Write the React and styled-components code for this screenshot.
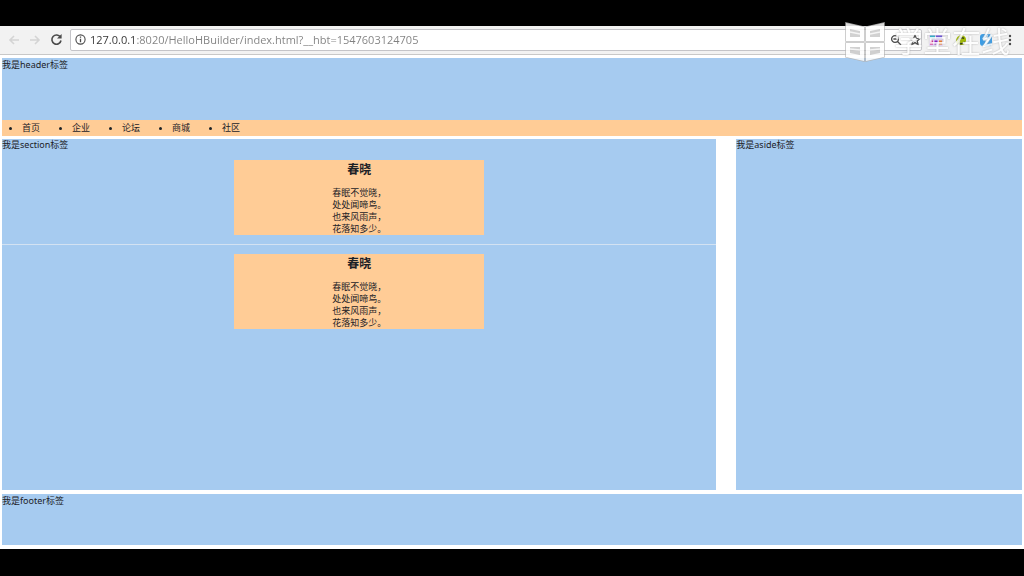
import styled, { createGlobalStyle } from 'styled-components';

const GlobalStyle = createGlobalStyle`
  * {
    box-sizing: border-box;
  }
  body {
    margin: 0;
    background-color: #000;
    color: #1c2126;
    font-family: 'Noto Sans', 'Noto Sans CJK SC', sans-serif;
    font-size: 9px;
    line-height: 12px;
  }
`;

const Screen = styled.div`
  position: relative;
  padding: 26px 0;
`;

const Toolbar = styled.div`
  display: flex;
  align-items: center;
  gap: 7px;
  height: 29px;
  padding: 0 8px 1px 7px;
  background-color: #f2f2f2;
  border-bottom: 1px solid #c8c8c8;
`;

const IconButton = styled.button`
  display: flex;
  align-items: center;
  justify-content: center;
  flex: none;
  width: ${(props) => (props.$small ? '12px' : '14px')};
  height: 16px;
  padding: 0;
  border: 0;
  background: none;
  color: ${(props) => (props.$muted ? '#d4d4d4' : '#4a4a4a')};
`;

const AddressBar = styled.div`
  display: flex;
  align-items: center;
  flex: 1;
  height: 22px;
  padding: 0 0 0 3px;
  background-color: #fff;
  border: 1px solid #c4c4c8;
  border-radius: 2px;
`;

const AddressInput = styled.input`
  flex: 1;
  min-width: 0;
  height: 18px;
  margin: 0 4px;
  padding: 0;
  border: 0;
  outline: 0;
  font-family: 'Open Sans', 'Noto Sans', sans-serif;
  font-size: 11px;
  color: #808080;
  background: linear-gradient(to right, #333 46px, #808080 46px);
  background-clip: text;
  -webkit-background-clip: text;
  -webkit-text-fill-color: transparent;
`;

const PageActions = styled.div`
  display: flex;
  gap: 7px;
`;

const Extensions = styled.div`
  display: flex;
  align-items: center;
  gap: 11px;
`;

const Page = styled.div`
  display: flex;
  flex-direction: column;
  gap: 3px;
  padding: 3px 2px 4px;
  background-color: #fff;
`;

const Header = styled.header`
  display: flex;
  flex-direction: column;
  justify-content: space-between;
  min-height: 78px;
  padding-top: 1px;
  background-color: #a6cbf0;
`;

const Menu = styled.ul`
  display: flex;
  margin: 0;
  padding: 0 0 0 20px;
  background-color: #ffcc96;
  line-height: 16px;
`;

const MenuItem = styled.li`
  width: 50px;
`;

const Columns = styled.div`
  display: grid;
  grid-template-columns: 70fr 28fr;
  gap: 20px;
  min-height: 351px;
`;

const Section = styled.section`
  background-color: #a6cbf0;
`;

const Divider = styled.hr`
  margin: 9px 0;
  border: 0;
  border-top: 1px solid #d3e2f2;
`;

const Poem = styled.article`
  width: 35%;
  margin: 9px auto;
  background-color: #ffcc96;
  text-align: center;
`;

const PoemTitle = styled.h3`
  margin: 0 0 8px;
  font-size: 12px;
  line-height: 19px;
`;

const PoemText = styled.p`
  margin: 0;
`;

const Aside = styled.aside`
  background-color: #a6cbf0;
`;

const Footer = styled.footer`
  min-height: 51px;
  margin-top: 1px;
  padding-top: 1px;
  background-color: #a6cbf0;
`;

const Watermark = styled.div`
  position: absolute;
  top: 20px;
  right: 14px;
  display: flex;
  align-items: center;
  gap: 8px;
  color: #fff;
  font-size: 29px;
  line-height: 44px;
  text-shadow: 0 0 2px #a0a0a0;
  opacity: 0.85;
  pointer-events: none;
`;

const menuItems = ['首页', '企业', '论坛', '商城', '社区'];
const poemLines = ['春眠不觉晓，', '处处闻啼鸟。', '也来风雨声，', '花落知多少。'];

function Arrow({ flip }) {
  return (
    <svg width="12" height="12" viewBox="0 0 12 12" fill="none" stroke="currentColor" strokeWidth="1.6">
      <path d={flip ? 'M1 6h9M6 2l4 4-4 4' : 'M11 6H2M6 2L2 6l4 4'} />
    </svg>
  );
}

function ReloadIcon() {
  return (
    <svg width="13" height="13" viewBox="0 0 13 13" fill="none" stroke="currentColor" strokeWidth="1.6">
      <path d="M10.4 4.2A4.6 4.6 0 1 0 11 7.5" />
      <path d="M11.6 1v4.6H7z" fill="currentColor" stroke="none" />
    </svg>
  );
}

function InfoIcon() {
  return (
    <svg width="11" height="11" viewBox="0 0 11 11" fill="none" stroke="currentColor" strokeWidth="1.1">
      <circle cx="5.5" cy="5.5" r="4.6" />
      <path d="M5.5 4.8v3.4M5.5 2.6v1.2" strokeWidth="1.3" />
    </svg>
  );
}

function ZoomOutIcon() {
  return (
    <svg width="12" height="12" viewBox="0 0 12 12" fill="none" stroke="currentColor" strokeWidth="1.3">
      <circle cx="5" cy="5" r="3.4" />
      <path d="M3.4 5h3.2M7.5 7.5L11 11" />
    </svg>
  );
}

function StarIcon() {
  return (
    <svg width="12" height="12" viewBox="0 0 12 12" fill="none" stroke="currentColor" strokeWidth="1.3">
      <path d="M6 1.2l1.4 3.2 3.5.3-2.7 2.3.9 3.5L6 8.6l-3.1 1.9.9-3.5L1.1 4.7l3.5-.3z" />
    </svg>
  );
}

function ColorGridIcon() {
  return (
    <svg width="14" height="12" viewBox="0 0 14 12">
      <rect width="14" height="12" rx="1" fill="#e6d6f6" />
      <path d="M1 3h5" stroke="#12b0d0" strokeWidth="3" />
      <path d="M7 3h6" stroke="#5a40e0" strokeWidth="3" />
      <path d="M1 8.5h3" stroke="#e00080" strokeWidth="4" />
      <path d="M5.5 8.5h3" stroke="#8000c8" strokeWidth="4" />
      <path d="M10 8.5h3" stroke="#f07010" strokeWidth="4" />
    </svg>
  );
}

function BugIcon() {
  return (
    <svg width="12" height="12" viewBox="0 0 12 12">
      <path d="M1 7C1 3 4 .8 7 1.2 10 1.6 11.500 4 11 7c-.4 3-2.4 4-5 4S1 10 1 7z" fill="#a0ba00" />
      <path d="M3 6.5C4 4 7 3 9 4.500M3 9c2 1 5 1 7-1" stroke="#2f3a04" strokeWidth="1.5" fill="none" />
    </svg>
  );
}

function BoltIcon() {
  return (
    <svg width="14" height="14" viewBox="0 0 14 14">
      <rect x="1" y="1" width="12" height="12" rx="3" fill="#3c9ce4" />
      <path d="M9.5 1L4 7.500h3L4.500 13 11 6H7.600z" fill="#fff" />
    </svg>
  );
}

function DotsIcon() {
  return (
    <svg width="4" height="12" viewBox="0 0 4 12" fill="currentColor">
      <circle cx="2" cy="2" r="1.2" />
      <circle cx="2" cy="6" r="1.2" />
      <circle cx="2" cy="10" r="1.2" />
    </svg>
  );
}

function BookLogo() {
  return (
    <svg width="42" height="42" viewBox="0 0 42 42">
      <path
        d="M2 2l18 4v14H2zM40 2L22 6v14h18zM2 22h18v18L2 36zM40 22H22v18l18-4z"
        fill="#cacaca"
        stroke="#b4b4b4"
        strokeWidth="1.5"
      />
      <g fill="#fff" fillRule="evenodd">
        <path d="M2 2l18 4v14H2zM6 8v8h10v-6z" />
        <path d="M40 2L22 6v14h18zM36 8v8H26v-6z" />
        <path d="M2 22h18v18L2 36zM6 26v6l10 2v-8z" />
        <path d="M40 22H22v18l18-4zM36 26v6l-10 2v-8z" />
      </g>
      <path d="M6 11l10 2M36 11l-10 2M6 28l10 1M36 28l-10 1" stroke="#f4f4f4" strokeWidth="1.5" />
    </svg>
  );
}

function PoemCard() {
  return (
    <Poem>
      <PoemTitle>春晓</PoemTitle>
      <PoemText>
        {poemLines.map((line) => (
          <span key={line}>
            {line}
            <br />
          </span>
        ))}
      </PoemText>
    </Poem>
  );
}

export default function App() {
  return (
    <Screen lang="zh-CN">
      <GlobalStyle />
      <Toolbar>
        <IconButton $muted aria-label="后退">
          <Arrow />
        </IconButton>
        <IconButton $muted aria-label="前进">
          <Arrow flip />
        </IconButton>
        <IconButton aria-label="刷新">
          <ReloadIcon />
        </IconButton>
        <AddressBar>
          <IconButton $small aria-label="网站信息">
            <InfoIcon />
          </IconButton>
          <AddressInput
            type="text"
            aria-label="地址"
            defaultValue="127.0.0.1:8020/HelloHBuilder/index.html?__hbt=1547603124705"
          />
          <PageActions>
            <IconButton $small aria-label="缩放">
              <ZoomOutIcon />
            </IconButton>
            <IconButton $small aria-label="收藏">
              <StarIcon />
            </IconButton>
          </PageActions>
        </AddressBar>
        <Extensions>
          <IconButton aria-label="取色">
            <ColorGridIcon />
          </IconButton>
          <IconButton aria-label="调试">
            <BugIcon />
          </IconButton>
          <IconButton aria-label="加速">
            <BoltIcon />
          </IconButton>
          <IconButton $small aria-label="菜单">
            <DotsIcon />
          </IconButton>
        </Extensions>
      </Toolbar>
      <Page>
        <Header>
          我是header标签
          <nav>
            <Menu>
              {menuItems.map((item) => (
                <MenuItem key={item}>{item}</MenuItem>
              ))}
            </Menu>
          </nav>
        </Header>
        <Columns>
          <Section>
            我是section标签
            <PoemCard />
            <Divider />
            <PoemCard />
          </Section>
          <Aside>我是aside标签</Aside>
        </Columns>
        <Footer>我是footer标签</Footer>
      </Page>
      <Watermark>
        <BookLogo />
        学堂在线
      </Watermark>
    </Screen>
  );
}
